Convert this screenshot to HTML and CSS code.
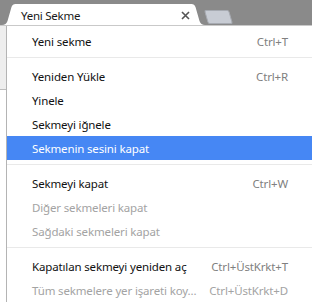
FILE: index.html
```html
<!DOCTYPE html>
<html lang="tr">
<head>
<meta charset="utf-8">
<link rel="stylesheet" href="styles.css">
</head>
<body>
<div class="screen">
  <div class="tabstrip">
    <div class="tab">
      <span class="tab-title">Yeni Sekme</span>
      <svg class="tab-close" width="9" height="9" viewBox="0 0 9 9"><path d="M1 1 L8 8 M8 1 L1 8" stroke="#555" stroke-width="1.6" fill="none"/></svg>
    </div>
    <div class="newtab"></div>
  </div>
  <div class="main">
    <div class="side"><div class="toolbar"></div></div>
    <div class="menu">
      <div class="item"><span class="label">Yeni sekme</span><span class="accel">Ctrl+T</span></div>
      <div class="sep"></div>
      <div class="item"><span class="label">Yeniden Yükle</span><span class="accel">Ctrl+R</span></div>
      <div class="item"><span class="label">Yinele</span></div>
      <div class="item"><span class="label">Sekmeyi iğnele</span></div>
      <div class="item active"><span class="label">Sekmenin sesini kapat</span></div>
      <div class="sep"></div>
      <div class="item"><span class="label">Sekmeyi kapat</span><span class="accel">Ctrl+W</span></div>
      <div class="item disabled"><span class="label">Diğer sekmeleri kapat</span></div>
      <div class="item disabled"><span class="label">Sağdaki sekmeleri kapat</span></div>
      <div class="sep"></div>
      <div class="item"><span class="label">Kapatılan sekmeyi yeniden aç</span><span class="accel">Ctrl+ÜstKrkt+T</span></div>
      <div class="item disabled"><span class="label">Tüm sekmelere yer işareti koy...</span><span class="accel">Ctrl+ÜstKrkt+D</span></div>
    </div>
  </div>
</div>
</body>
</html>
```

FILE: styles.css
```css
html, body {
  margin: 0;
  padding: 0;
}
body {
  width: 312px;
  height: 302px;
  overflow: hidden;
  background: #ffffff;
  font-family: "Noto Sans", "Open Sans", sans-serif;
  font-size: 11.5px;
  letter-spacing: -0.15px;
  color: #111;
}
.screen {
  width: 312px;
  height: 302px;
  display: flex;
  flex-direction: column;
  overflow: hidden;
}
.tabstrip {
  height: 25px;
  flex: none;
  background: #8a8a8a;
  display: flex;
  align-items: flex-start;
}
.tab {
  margin-left: 2px;
  margin-top: 4px;
  width: 203px;
  height: 21px;
  background: #ffffff;
  clip-path: path('M0,21 C3,21 4.5,19.5 5.5,17 L9.5,3 C10.2,1 11.5,0 13.5,0 L189.5,0 C191.5,0 192.8,1 193.5,3 L197.5,17 C198.5,19.5 200,21 203,21 Z');
  display: flex;
  align-items: center;
  box-sizing: border-box;
  padding: 2px 0 0 19px;
}
.tab-title {
  color: #1a1a1a;
  white-space: nowrap;
  letter-spacing: -0.25px;
}
.tab-close {
  margin-left: auto;
  margin-right: 15px;
  display: block;
}
.newtab {
  margin-left: 1px;
  margin-top: 10px;
  width: 25px;
  height: 14px;
  box-sizing: border-box;
  background: #c8ccd4;
  border: 1px solid #a7abb2;
  border-radius: 2px;
  transform: skewX(16deg);
}
.main {
  flex: 1;
  display: flex;
  border-top: 1px solid #c9c9c9;
  min-height: 0;
}
.side {
  width: 6px;
  flex: none;
  display: flex;
  flex-direction: column;
}
.toolbar {
  height: 63px;
  background: #eeeeee;
  border-bottom: 1px solid #bdbdbd;
}
.menu {
  flex: 1;
  min-width: 0;
  overflow: hidden;
  border-left: 1px solid #b4b4b4;
  background: #ffffff;
  padding-top: 3px;
  display: flex;
  flex-direction: column;
}
.item {
  height: 24px;
  flex: none;
  display: flex;
  align-items: center;
  justify-content: space-between;
  padding: 0 24px 0 25px;
  white-space: nowrap;
}
.accel {
  color: #808080;
}
.item.disabled .label,
.item.disabled .accel {
  color: #a3a3a3;
}
.item.active {
  background: #4687f4;
  color: #ffffff;
}
.sep {
  flex: none;
  height: 1px;
  background: #e9e9e9;
  margin: 4px 0 6px;
}
```
